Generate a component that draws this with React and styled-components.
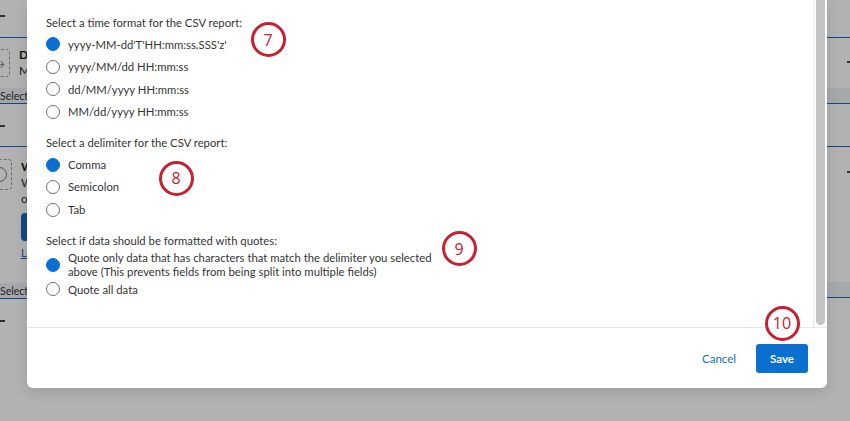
import styled, { createGlobalStyle } from "styled-components";

const GlobalStyle = createGlobalStyle`
  html, body {
    margin: 0;
    padding: 0;
  }
  body {
    font-family: Lato, "Open Sans", Arial, sans-serif;
    color: #333;
    background: #fff;
  }
`;

const Page = styled.div`
  position: relative;
  width: 850px;
  height: 421px;
  overflow: hidden;
  background: #fff;
`;

/* ---------- page behind the dialog ---------- */

const Backdrop = styled.div`
  display: flex;
  height: 100%;
  font-size: 10.5px;
  color: #333;
`;

const Panel = styled.div`
  display: flex;
  flex-direction: column;
  flex: ${(p) => (p.$grow ? 1 : "none")};
  width: ${(p) => (p.$grow ? "auto" : "440px")};
  margin-left: ${(p) => (p.$grow ? "0" : "-20px")};
`;

const Block = styled.div`
  display: flex;
  flex: none;
  align-items: ${(p) => (p.$top ? "flex-start" : "center")};
  justify-content: ${(p) => (p.$right ? "flex-end" : "flex-start")};
  gap: 9px;
  height: ${(p) => p.$h}px;
  padding: ${(p) => p.$pad || "0 0 0 20px"};
  box-sizing: border-box;
  border-bottom: ${(p) => (p.$line ? "1px solid #1c66c4" : "none")};
`;

const Band = styled(Block)`
  background: #eef1f6;
  padding-left: 20px;
`;

const Dash = styled.span`
  display: block;
  width: 5px;
  height: 1.5px;
  background: #444;
  margin-right: ${(p) => (p.$edge ? "-2px" : "0")};
`;

const DashedBox = styled.div`
  flex: none;
  width: ${(p) => p.$w}px;
  height: ${(p) => p.$h}px;
  border: 1px dashed #9a9a9a;
  border-radius: 4px;
  box-sizing: border-box;
  display: flex;
  align-items: center;
  justify-content: flex-end;
  padding-right: 4px;
  color: #777;
  font-size: 12px;
`;

const Ring = styled.span`
  width: 15px;
  height: 15px;
  border: 1.5px solid #777;
  border-radius: 50%;
  box-sizing: border-box;
`;

const CardText = styled.div`
  display: flex;
  flex-direction: column;
  line-height: 16px;
  font-size: 12px;

  b {
    font-weight: 700;
    color: #222;
  }
`;

const BlueButton = styled.div`
  width: 20px;
  height: 28px;
  border-radius: 4px;
  background: #1c66c4;
  margin: 6px 0 4px;
`;

const TextLink = styled.span`
  color: #1c66c4;
  text-decoration: underline;
  font-size: 11px;
`;

/* ---------- dialog ---------- */

const Overlay = styled.div`
  position: absolute;
  inset: 0;
  background: rgba(0, 0, 0, 0.3);
  display: flex;
  flex-direction: column;
  justify-content: flex-end;
  padding: 0 23px 33px 27px;
`;

const Modal = styled.div`
  width: 800px;
  height: 388px;
  background: #fff;
  border-radius: 0 0 6px 6px;
  display: flex;
  flex-direction: column;
  box-shadow: 0 4px 14px rgba(0, 0, 0, 0.12);
  overflow: hidden;
`;

const Body = styled.div`
  flex: 1;
  display: flex;
  min-height: 0;
`;

const Content = styled.div`
  flex: 1;
  padding: 15.7px 0 0 19px;
  font-size: 11.3px;
  color: #353535;
`;

const Section = styled.div`
  margin-bottom: 13px;
`;

const SectionLabel = styled.div`
  line-height: 14px;
  margin-bottom: 3.35px;
`;

const Option = styled.label`
  display: flex;
  align-items: center;
  min-height: 22.5px;
  gap: 8px;
`;

const Radio = styled.span`
  flex: none;
  width: 14px;
  height: 14px;
  border-radius: 50%;
  box-sizing: border-box;
  background: ${(p) => (p.$on ? "#0b6fd0" : "#fff")};
  border: 1px solid ${(p) => (p.$on ? "#0b6fd0" : "#707070")};
`;

const OptionText = styled.span`
  line-height: 13.5px;
  max-width: 366px;
`;

const Scrollbar = styled.div`
  width: 14px;
  border-left: 1px solid #ebebeb;
  background: #fbfbfb;
  box-sizing: border-box;
  padding: 0 0 2px 2px;
  display: flex;
`;

const Thumb = styled.div`
  width: 9px;
  background: #c4c4c4;
  border-radius: 0 0 5px 5px;
`;

const Footer = styled.div`
  flex: none;
  height: 61px;
  box-sizing: border-box;
  border-top: 1px solid #e6e6e6;
  display: flex;
  align-items: center;
  justify-content: flex-end;
  gap: 10px;
  padding-right: 19px;
`;

const CancelButton = styled.button`
  height: 29px;
  padding: 0 10px;
  border: none;
  background: none;
  color: #0b6fd0;
  font-family: inherit;
  font-size: 11.5px;
`;

const SaveButton = styled.button`
  width: 52px;
  height: 29px;
  border: none;
  border-radius: 3px;
  background: #0b6fd0;
  color: #fff;
  font-family: inherit;
  font-size: 11.5px;
  font-weight: 700;
`;

/* numbered callouts */
const Marker = styled.div`
  position: absolute;
  left: ${(p) => p.$x - 17.5}px;
  top: ${(p) => p.$y - 17.5}px;
  width: 35px;
  height: 35px;
  box-sizing: border-box;
  border: 3px solid #c8202f;
  border-radius: 50%;
  background: #fff;
  color: #c8202f;
  font-family: "Open Sans", Arial, sans-serif;
  font-size: 16px;
  display: flex;
  align-items: center;
  justify-content: center;
`;

const sections = [
  {
    label: "Select a time format for the CSV report:",
    options: [
      "yyyy-MM-dd'T'HH:mm:ss.SSS'z'",
      "yyyy/MM/dd HH:mm:ss",
      "dd/MM/yyyy HH:mm:ss",
      "MM/dd/yyyy HH:mm:ss",
    ],
  },
  {
    label: "Select a delimiter for the CSV report:",
    options: ["Comma", "Semicolon", "Tab"],
  },
  {
    label: "Select if data should be formatted with quotes:",
    options: [
      "Quote only data that has characters that match the delimiter you selected above (This prevents fields from being split into multiple fields)",
      "Quote all data",
    ],
  },
];

const markers = [
  { n: 7, x: 268, y: 39.5 },
  { n: 8, x: 176, y: 178 },
  { n: 9, x: 459, y: 248.5 },
  { n: 10, x: 782, y: 323 },
];

export default function App() {
  return (
    <Page>
      <GlobalStyle />
      <Backdrop>
        <Panel>
          <Block $h={38} $line $top $pad="15px 0 0 20px">
            <Dash />
          </Block>
          <Block $h={50} $pad="0 0 0 2px">
            <DashedBox $w={28} $h={28}>→</DashedBox>
            <CardText>
              <b>Data</b>
              <span>Map</span>
            </CardText>
          </Block>
          <Band $h={16} $line>Select</Band>
          <Block $h={43} $line $top $pad="21px 0 0 20px">
            <Dash />
          </Block>
          <Block $h={136} $top $pad="12px 0 0 0">
            <DashedBox $w={32} $h={31}>
              <Ring />
            </DashedBox>
            <CardText>
              <b>Web</b>
              <span>With</span>
              <span>on</span>
              <BlueButton />
              <TextLink>Le</TextLink>
            </CardText>
          </Block>
          <Band $h={16} $line>Select</Band>
          <Block $h={40} $top $pad="21px 0 0 20px">
            <Dash />
          </Block>
        </Panel>
        <Panel $grow>
          <Block $h={38} $line />
          <Block $h={50} $right $top $pad="23px 0 0 0">
            <Dash $edge />
          </Block>
          <Band $h={16} $line />
          <Block $h={43} $line />
          <Block $h={135} $right $top $pad="24px 0 0 0">
            <Dash $edge />
          </Block>
          <Band $h={16} $line />
        </Panel>
      </Backdrop>

      <Overlay>
        <Modal>
          <Body>
            <Content>
              {sections.map((s) => (
                <Section key={s.label}>
                  <SectionLabel>{s.label}</SectionLabel>
                  {s.options.map((o, i) => (
                    <Option key={o}>
                      <Radio $on={i === 0} />
                      <OptionText>{o}</OptionText>
                    </Option>
                  ))}
                </Section>
              ))}
            </Content>
            <Scrollbar>
              <Thumb />
            </Scrollbar>
          </Body>
          <Footer>
            <CancelButton>Cancel</CancelButton>
            <SaveButton>Save</SaveButton>
          </Footer>
        </Modal>
      </Overlay>

      {markers.map((m) => (
        <Marker key={m.n} $x={m.x} $y={m.y}>
          {m.n}
        </Marker>
      ))}
    </Page>
  );
}
